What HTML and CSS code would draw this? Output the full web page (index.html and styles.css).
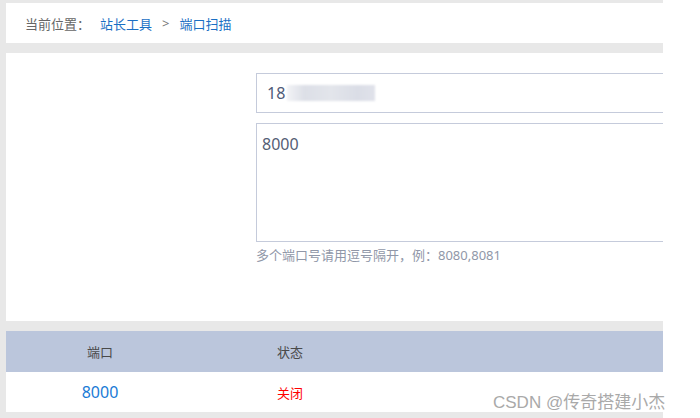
FILE: index.html
```html
<!DOCTYPE html>
<html lang="zh-CN">
<head>
    <meta charset="UTF-8">
    <meta name="viewport" content="width=device-width, initial-scale=1.0">
    <title>端口扫描</title>
    <link rel="stylesheet" href="styles.css">
</head>
<body>

    <div class="page">
        <div class="crumb">
            <span class="label">当前位置：</span>
            <a href="#">站长工具</a>
            <span class="sep">&gt;</span>
            <a href="#">端口扫描</a>
        </div>

        <div class="panel">
            <div class="field">
                <span class="host">18</span><span class="blur"></span>
            </div>
            <div class="ports">8000</div>
            <p class="hint">多个端口号请用逗号隔开，例：8080,8081</p>
        </div>

        <table class="result">
            <thead>
                <tr><th>端口</th><th>状态</th><th></th></tr>
            </thead>
            <tbody>
                <tr><td class="port">8000</td><td class="closed">关闭</td><td></td></tr>
            </tbody>
        </table>
    </div>

    <div class="mark">CSDN @传奇搭建小杰</div>

</body>
</html>
```

FILE: styles.css
```css
* {
    box-sizing: border-box;
}
body {
    margin: 0;
    background-color: #fff;
    font-family: "Noto Sans", "Noto Sans CJK SC", sans-serif;
    position: relative;
    height: 418px;
    overflow: hidden;
}
.page {
    width: 663px;
    background-color: #e8e8e8;
    padding: 3px 0 6px 6px;
}
.crumb {
    height: 40px;
    background-color: #fff;
    padding-left: 19px;
    display: flex;
    align-items: center;
    font-size: 13px;
    color: #666;
}
.crumb a {
    color: #1a6fc4;
    text-decoration: none;
    margin-left: 10px;
}
.crumb .sep {
    margin-left: 10px;
    color: #777;
}
.panel {
    margin-top: 10px;
    height: 268px;
    background-color: #fff;
    padding: 20px 0 0 250px;
    overflow: hidden;
}
.field {
    width: 500px;
    height: 40px;
    border: 1px solid #c5cbdb;
    display: flex;
    align-items: center;
    padding-left: 10px;
    font-size: 16px;
    color: #4e5a78;
}
.blur {
    width: 88px;
    height: 16px;
    margin-left: 2px;
    background: linear-gradient(90deg, #f2f3f6, #dcdfe7 20%, #e3e5eb 50%, #dadde6 80%, #e0e2ea);
    filter: blur(1px);
}
.ports {
    width: 500px;
    height: 119px;
    margin-top: 10px;
    border: 1px solid #c5cbdb;
    padding: 9px 5px;
    font-size: 16px;
    color: #555e74;
}
.hint {
    margin: 3px 0 0;
    font-size: 13px;
    color: #9097a8;
}
.result {
    margin-top: 10px;
    width: 100%;
    border-collapse: collapse;
    background-color: #fff;
}
.result th {
    height: 41px;
    background-color: #bbc6dc;
    font-weight: normal;
    font-size: 13px;
    color: #4a4a4a;
    border-bottom: 1px solid #fff;
}
.result th:nth-child(1), .result td:nth-child(1) {
    width: 188px;
}
.result th:nth-child(2), .result td:nth-child(2) {
    width: 192px;
}
.result td {
    height: 40px;
    text-align: center;
}
.result .port {
    font-size: 16px;
    color: #1a7bd6;
}
.result .closed {
    font-size: 13px;
    color: #f00;
}
.mark {
    position: absolute;
    left: 493px;
    top: 388px;
    font-family: "Liberation Sans", "Noto Sans CJK SC", sans-serif;
    font-size: 17px;
    color: #a9a9a9;
    text-shadow: 1px 1px 0 #fff;
}
```
